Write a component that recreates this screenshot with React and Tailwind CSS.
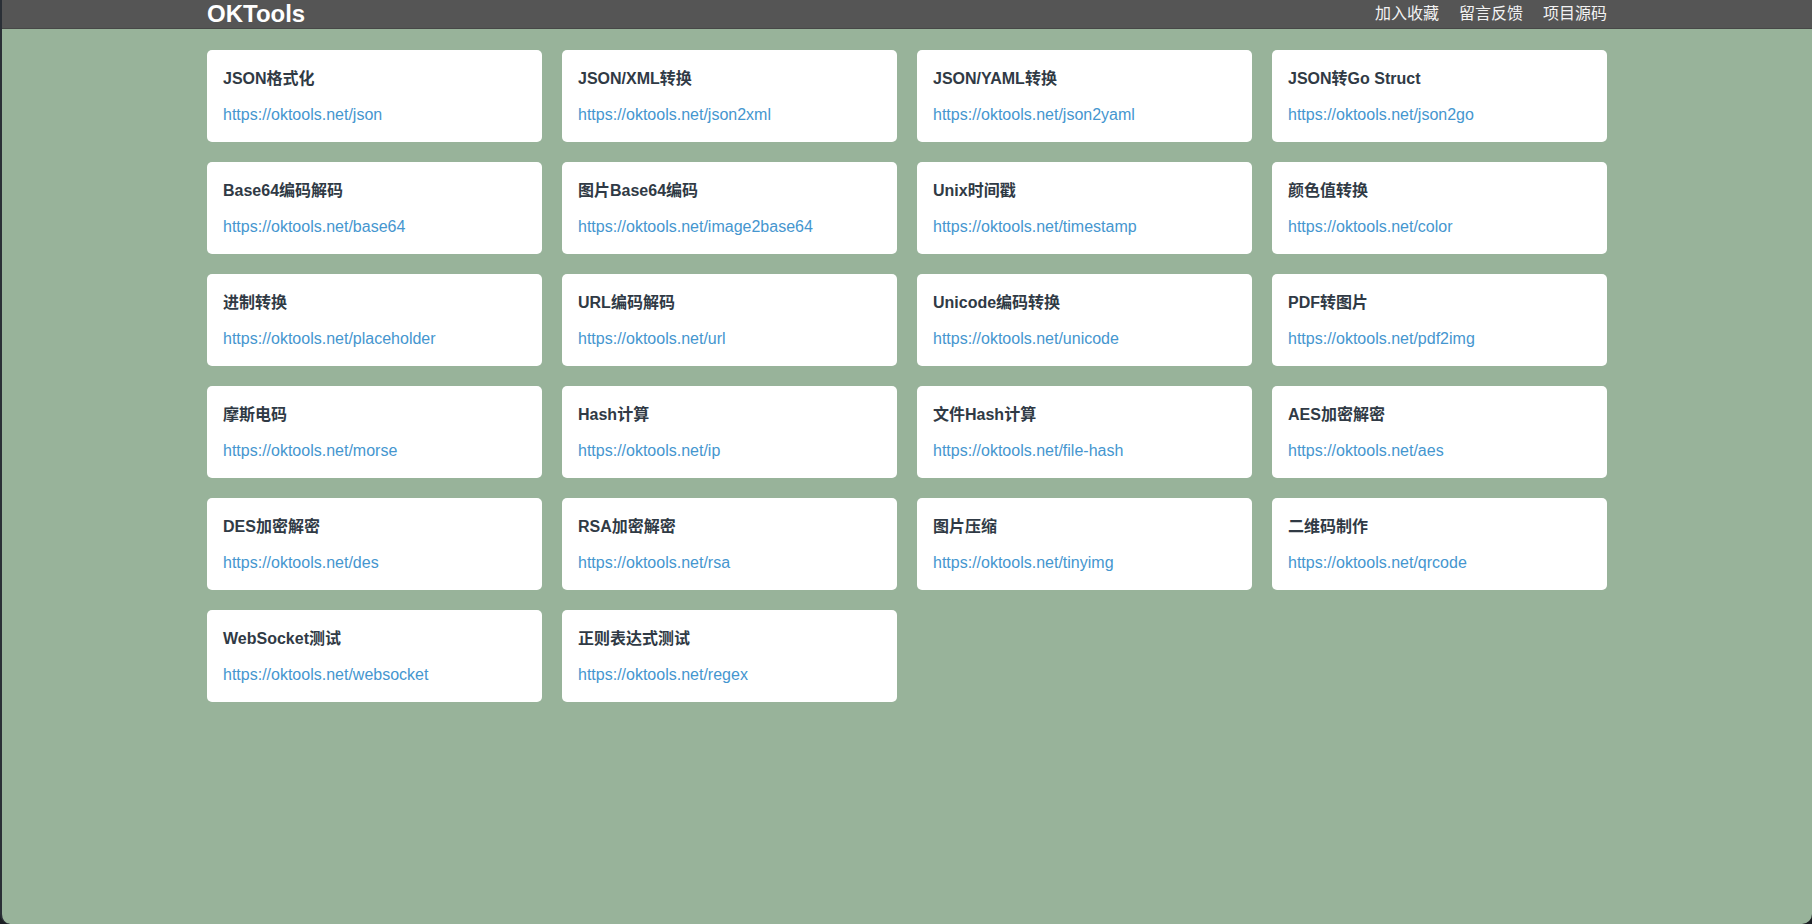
import React from "react";

const tools = [
  { name: "JSON格式化", path: "json" },
  { name: "JSON/XML转换", path: "json2xml" },
  { name: "JSON/YAML转换", path: "json2yaml" },
  { name: "JSON转Go Struct", path: "json2go" },
  { name: "Base64编码解码", path: "base64" },
  { name: "图片Base64编码", path: "image2base64" },
  { name: "Unix时间戳", path: "timestamp" },
  { name: "颜色值转换", path: "color" },
  { name: "进制转换", path: "placeholder" },
  { name: "URL编码解码", path: "url" },
  { name: "Unicode编码转换", path: "unicode" },
  { name: "PDF转图片", path: "pdf2img" },
  { name: "摩斯电码", path: "morse" },
  { name: "Hash计算", path: "ip" },
  { name: "文件Hash计算", path: "file-hash" },
  { name: "AES加密解密", path: "aes" },
  { name: "DES加密解密", path: "des" },
  { name: "RSA加密解密", path: "rsa" },
  { name: "图片压缩", path: "tinyimg" },
  { name: "二维码制作", path: "qrcode" },
  { name: "WebSocket测试", path: "websocket" },
  { name: "正则表达式测试", path: "regex" },
];

const font = {
  fontFamily: '"Liberation Sans", Arial, "Noto Sans CJK SC", sans-serif',
};

export default function App() {
  return (
    <div className="h-[924px] w-[1812px] bg-[#1c1f24] overflow-hidden" style={font}>
      <div className="h-full bg-[#98b39a] rounded-b-[10px] border-l-2 border-[#2a2f36] flex flex-col">
        <header className="h-[29px] bg-[#555555] border-b border-[#474747]">
          <div className="max-w-[1400px] mx-auto h-full flex items-center justify-between">
            <a className="text-white text-[24px] font-bold leading-none -mt-[1px]">
              OKTools
            </a>
            <nav className="flex items-center gap-[20px] text-[16px] text-[#f2f2f2]">
              <a>加入收藏</a>
              <a>留言反馈</a>
              <a>项目源码</a>
            </nav>
          </div>
        </header>

        <main className="max-w-[1400px] w-full mx-auto pt-[21px]">
          <div className="grid grid-cols-4 gap-x-[20px] gap-y-[20px]">
            {tools.map((t) => (
              <a
                key={t.path + t.name}
                className="block h-[92px] bg-white rounded-[5px] px-[16px] pt-[17px]"
              >
                <div className="text-[16px] leading-[24px] font-bold text-[#303a45]">
                  {t.name}
                </div>
                <div className="mt-[12px] text-[16px] leading-[24px] text-[#4596cf]">
                  https://oktools.net/{t.path}
                </div>
              </a>
            ))}
          </div>
        </main>
      </div>
    </div>
  );
}
